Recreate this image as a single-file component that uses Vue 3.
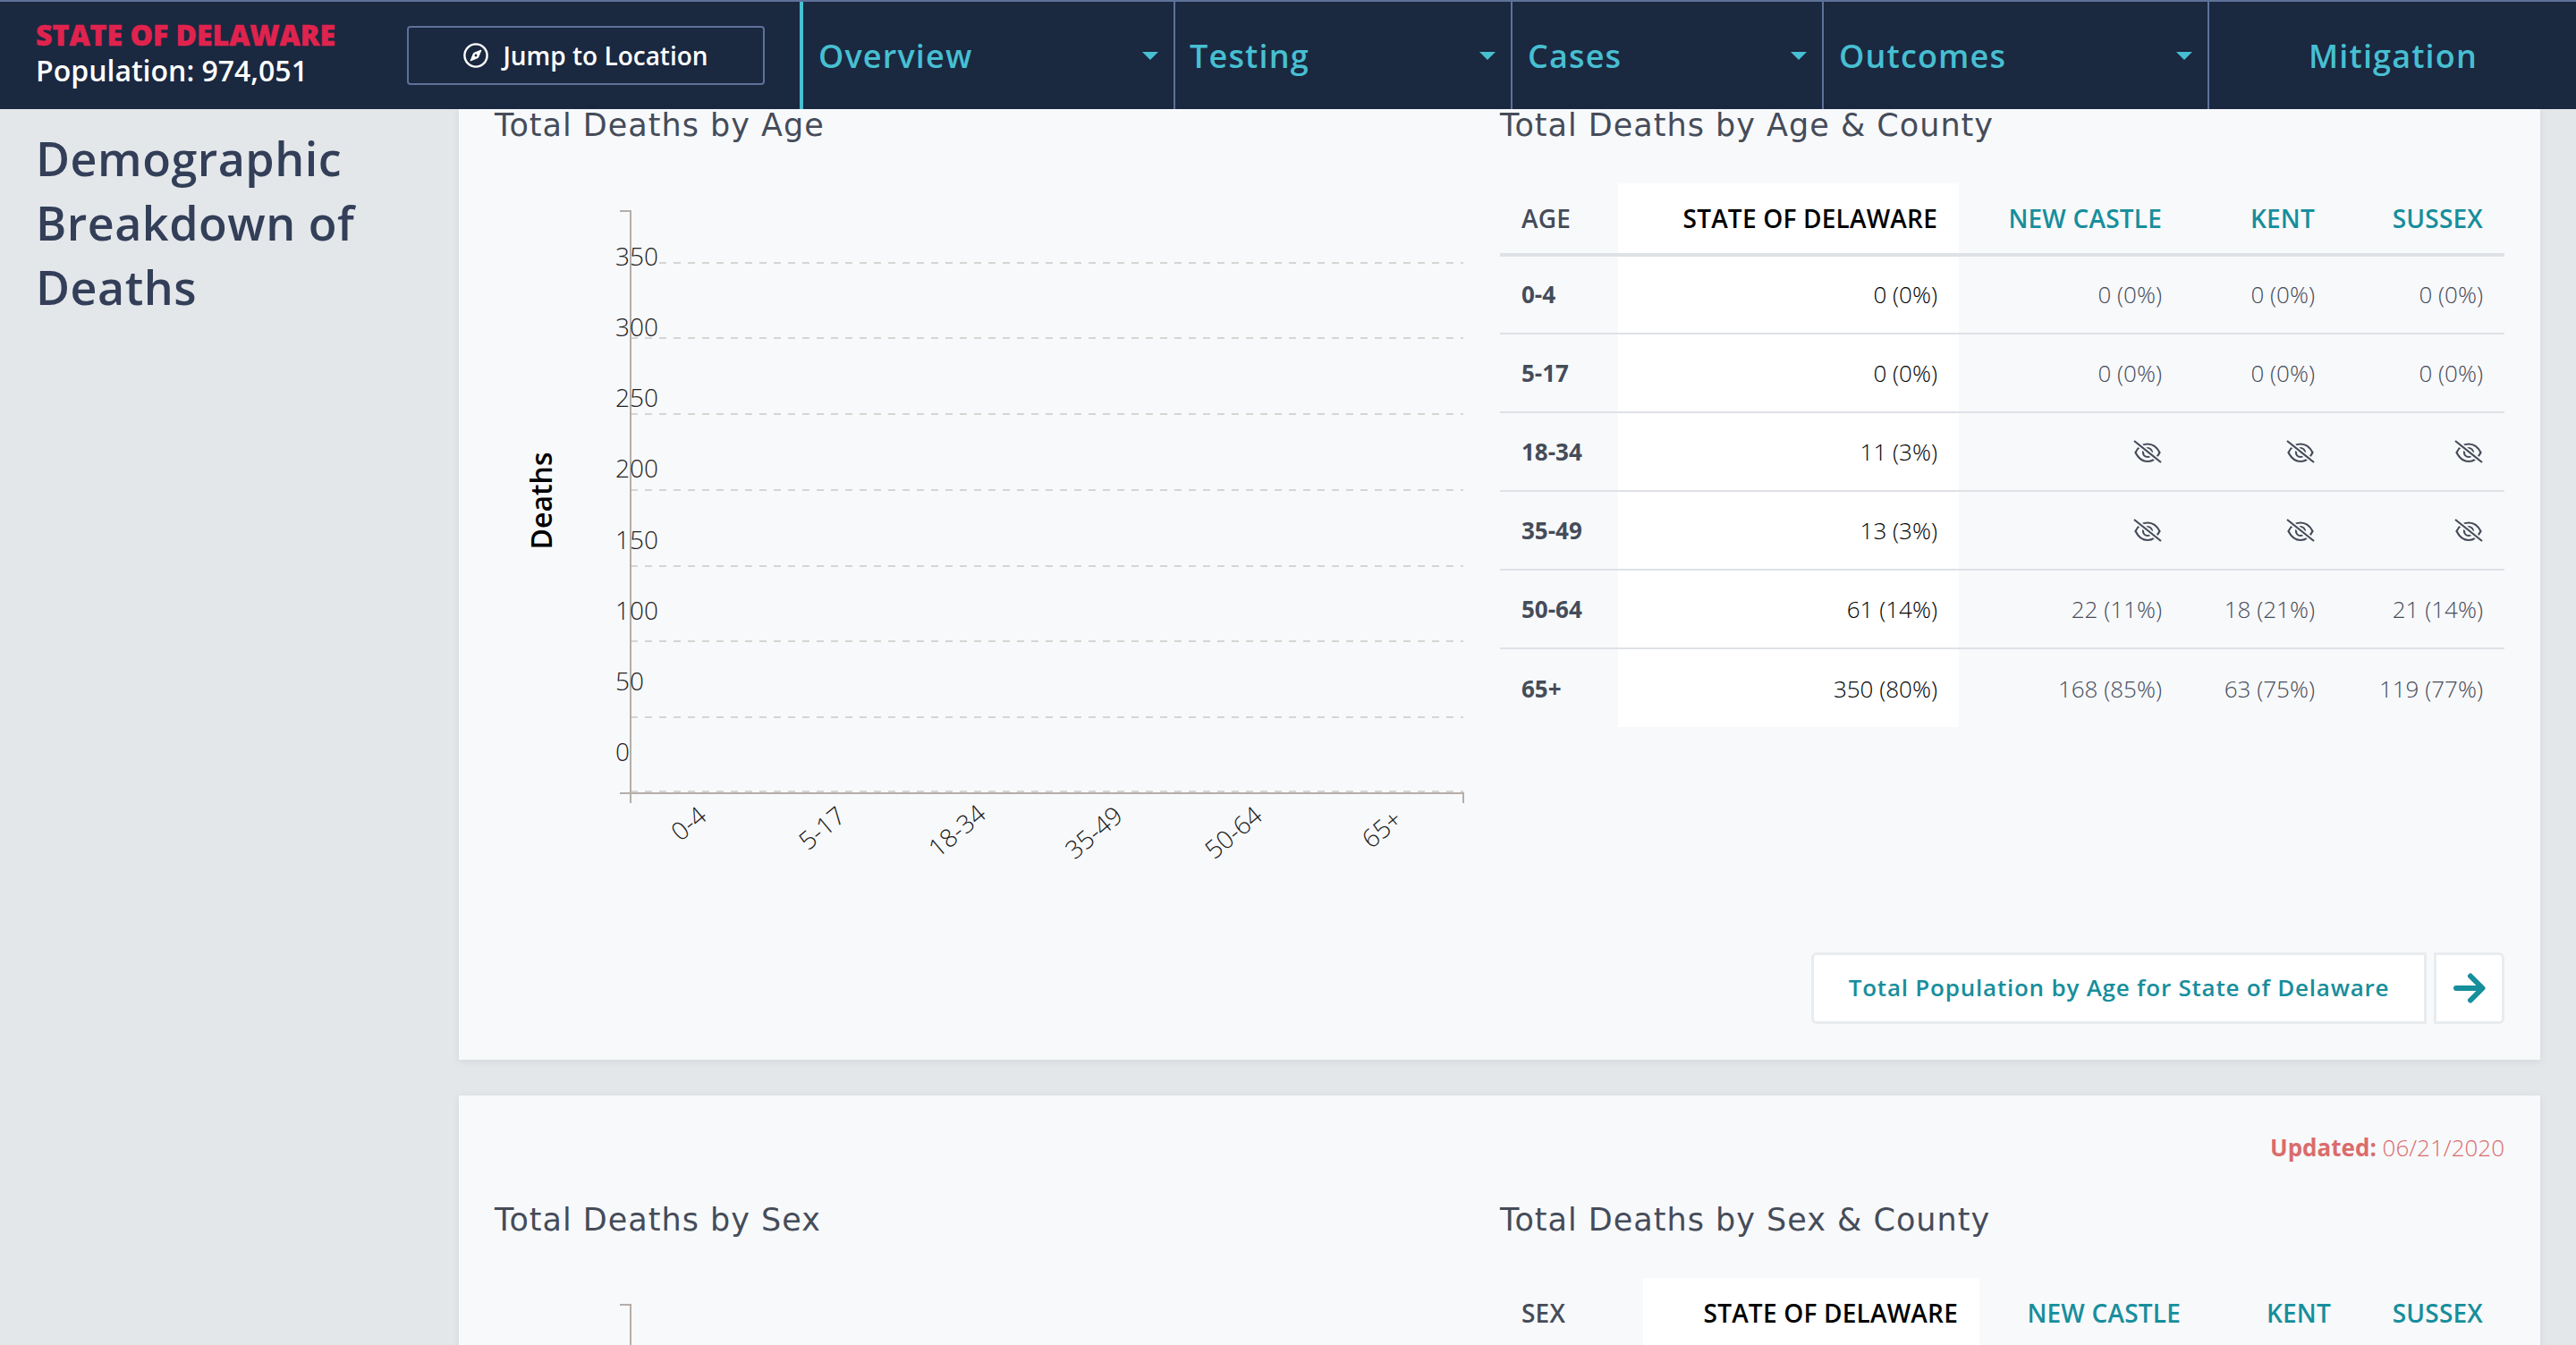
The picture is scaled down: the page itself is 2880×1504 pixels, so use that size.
<script setup>
const navItems = [
  { label: 'Overview', caret: true, cls: 'nav-overview' },
  { label: 'Testing', caret: true, cls: 'nav-testing' },
  { label: 'Cases', caret: true, cls: 'nav-cases' },
  { label: 'Outcomes', caret: true, cls: 'nav-outcomes' },
  { label: 'Mitigation', caret: false, cls: 'nav-mitigation' }
]

const gridLines = [
  { y: 294, x: 737 },
  { y: 378, x: 705 },
  { y: 463, x: 705 },
  { y: 548, x: 705 },
  { y: 633, x: 705 },
  { y: 717, x: 705 },
  { y: 802, x: 705 },
  { y: 885, x: 705 }
]

const yLabels = [
  { text: '350', y: 297 },
  { text: '300', y: 376 },
  { text: '250', y: 455 },
  { text: '200', y: 534 },
  { text: '150', y: 614 },
  { text: '100', y: 693 },
  { text: '50', y: 772 },
  { text: '0', y: 851 }
]

const xLabels = [
  { text: '0-4', x: 770, y: 931 },
  { text: '5-17', x: 919, y: 936 },
  { text: '18-34', x: 1070, y: 939 },
  { text: '35-49', x: 1223, y: 941 },
  { text: '50-64', x: 1379, y: 941 },
  { text: '65+', x: 1545, y: 937 }
]

const rows = [
  { age: '0-4', state: '0 (0%)', nc: '0 (0%)', kent: '0 (0%)', sussex: '0 (0%)' },
  { age: '5-17', state: '0 (0%)', nc: '0 (0%)', kent: '0 (0%)', sussex: '0 (0%)' },
  { age: '18-34', state: '11 (3%)', nc: null, kent: null, sussex: null },
  { age: '35-49', state: '13 (3%)', nc: null, kent: null, sussex: null },
  { age: '50-64', state: '61 (14%)', nc: '22 (11%)', kent: '18 (21%)', sussex: '21 (14%)' },
  { age: '65+', state: '350 (80%)', nc: '168 (85%)', kent: '63 (75%)', sussex: '119 (77%)' }
]

const counties = ['nc', 'kent', 'sussex']
</script>

<template>
  <div class="page">
    <header class="topbar">
      <div class="place">
        <div class="place-name">STATE OF DELAWARE</div>
        <div class="place-pop">Population: 974,051</div>
      </div>
      <div class="jump-wrap">
        <button class="jump">
          <svg class="compass" viewBox="0 0 28 28" fill="none" stroke="#fff" stroke-width="2.4">
            <circle cx="14" cy="14" r="12.6" />
            <path d="M20 8 L16.5 16.5 L8 20 L11.5 11.5 Z" fill="#fff" stroke-width="1" />
            <circle cx="14" cy="14" r="1.4" fill="#1a2840" stroke="none" />
          </svg>
          Jump to Location
        </button>
      </div>
      <nav class="nav">
        <div v-for="item in navItems" :key="item.label" class="nav-item" :class="item.cls">
          <span>{{ item.label }}</span>
          <i v-if="item.caret" class="caret"></i>
        </div>
      </nav>
    </header>

    <main class="main">
      <aside class="side">
        <h2>Demographic Breakdown of Deaths</h2>
      </aside>

      <div class="cards">
        <section class="card card-age">
          <div class="columns">
            <div class="col">
              <h3>Total Deaths by Age</h3>
            </div>
            <div class="col">
              <h3>Total Deaths by Age &amp; County</h3>
              <table class="tbl">
                <colgroup>
                  <col style="width: 132px" />
                  <col style="width: 381px" />
                  <col style="width: 251px" />
                  <col style="width: 171px" />
                  <col style="width: 188px" />
                </colgroup>
                <thead>
                  <tr>
                    <th class="first">AGE</th>
                    <th class="state">STATE OF DELAWARE</th>
                    <th class="county">NEW CASTLE</th>
                    <th class="county">KENT</th>
                    <th class="county">SUSSEX</th>
                  </tr>
                </thead>
                <tbody>
                  <tr v-for="row in rows" :key="row.age">
                    <td class="first">{{ row.age }}</td>
                    <td class="state">{{ row.state }}</td>
                    <td v-for="c in counties" :key="c" class="county">
                      <template v-if="row[c]">{{ row[c] }}</template>
                      <svg v-else class="eye" viewBox="0 0 32 26" fill="none" stroke="#454c59" stroke-width="2.2">
                        <path d="M2.5 14 C5.5 8 10 4.5 16 4.5 C22 4.5 26.5 8 29.5 14 C26.5 20 22 24 16 24 C10 24 5.5 20 2.5 14 Z" />
                        <circle cx="16" cy="14" r="5" />
                        <path d="M1 1 L31 25" stroke="#f8f9fb" stroke-width="5.5" />
                        <path d="M1 1 L31 25" />
                      </svg>
                    </td>
                  </tr>
                </tbody>
              </table>
            </div>
          </div>
          <div class="links">
            <a class="link-main">Total Population by Age for State of Delaware</a>
            <a class="link-arrow">
              <svg viewBox="0 0 36 34" width="36" height="34" fill="none" stroke="#178e9c" stroke-width="6" stroke-linecap="round" stroke-linejoin="round">
                <path d="M3 17 H32 M19 3.5 L32.5 17 L19 30.5" />
              </svg>
            </a>
          </div>
        </section>

        <section class="card card-sex">
          <div class="updated"><b>Updated:</b> 06/21/2020</div>
          <div class="columns">
            <div class="col">
              <h3>Total Deaths by Sex</h3>
            </div>
            <div class="col">
              <h3>Total Deaths by Sex &amp; County</h3>
              <table class="tbl">
                <colgroup>
                  <col style="width: 160px" />
                  <col style="width: 376px" />
                  <col style="width: 249px" />
                  <col style="width: 168px" />
                  <col style="width: 170px" />
                </colgroup>
                <thead>
                  <tr>
                    <th class="first">SEX</th>
                    <th class="state">STATE OF DELAWARE</th>
                    <th class="county">NEW CASTLE</th>
                    <th class="county">KENT</th>
                    <th class="county">SUSSEX</th>
                  </tr>
                </thead>
              </table>
            </div>
          </div>
        </section>

        <!-- both charts share one free canvas over the cards -->
        <svg class="chart" viewBox="0 0 2880 1504" width="2880" height="1504">
          <line v-for="g in gridLines" :key="g.y" :x1="g.x" :x2="1636" :y1="g.y" :y2="g.y" class="grid" />
          <path d="M693 236 H705 V898" class="axis" />
          <path d="M693 887 H1636 V898" class="axis" />
          <path d="M693 1459 H705 V1504" class="axis" />
          <text v-for="l in yLabels" :key="l.text" x="688" :y="l.y" class="tick">{{ l.text }}</text>
          <text
            v-for="l in xLabels"
            :key="l.text"
            :x="l.x"
            :y="l.y"
            class="tick mid"
            :transform="`rotate(-40 ${l.x} ${l.y - 10})`"
          >{{ l.text }}</text>
          <text x="0" y="0" class="ytitle" transform="translate(617 560) rotate(-90)">Deaths</text>
        </svg>
      </div>
    </main>
  </div>
</template>

<style scoped>
.page {
  width: 2880px;
  height: 1504px;
  overflow: hidden;
  background: #e4e7ea;
  font-family: 'Open Sans', 'Noto Sans', sans-serif;
  display: flex;
  flex-direction: column;
}

.topbar {
  height: 122px;
  box-sizing: border-box;
  flex: none;
  display: flex;
  background: #1a2840;
  border-top: 2px solid #5d7199;
}
.place {
  width: 455px;
  flex: none;
  box-sizing: border-box;
  padding: 17px 0 0 40px;
}
.place-name {
  color: #e0234e;
  font-size: 32px;
  font-weight: 800;
  line-height: 40px;
  -webkit-text-stroke: 0.5px #e0234e;
}
.place-pop {
  color: #fff;
  font-size: 32px;
  font-weight: 600;
  line-height: 40px;
}
.jump-wrap {
  width: 439px;
  flex: none;
  padding-top: 27px;
}
.jump {
  width: 400px;
  height: 66px;
  box-sizing: border-box;
  background: transparent;
  border: 2px solid #5d7199;
  border-radius: 4px;
  color: #fff;
  font-family: inherit;
  font-size: 28px;
  font-weight: 600;
  display: flex;
  align-items: center;
  justify-content: center;
  gap: 16px;
}
.compass {
  width: 28px;
  height: 28px;
}
.nav {
  flex: 1;
  display: flex;
}
.nav-item {
  box-sizing: border-box;
  border-left: 2px solid #5d7199;
  color: #47bfd1;
  font-size: 36px;
  font-weight: 600;
  letter-spacing: 1.15px;
  display: flex;
  align-items: center;
  justify-content: space-between;
  padding: 0 17px 0 16px;
}
.nav-overview { width: 418px; border-left: 4px solid #47bfd1; padding-left: 17px; }
.nav-testing { width: 377px; }
.nav-cases { width: 348px; padding-left: 17px; }
.nav-outcomes { width: 431px; padding-left: 17px; }
.nav-mitigation { flex: 1; justify-content: flex-start; padding-left: 111px; }
.caret {
  width: 0;
  height: 0;
  border-left: 9px solid transparent;
  border-right: 9px solid transparent;
  border-top: 9px solid #47bfd1;
  margin-right: 0;
}

.main {
  flex: 1;
  display: flex;
  min-height: 0;
}
.side {
  width: 513px;
  flex: none;
  box-sizing: border-box;
  padding: 19px 40px 0;
}
.side h2 {
  margin: 0;
  color: #333f58;
  font-size: 52px;
  font-weight: 600;
  letter-spacing: 0.5px;
  line-height: 72px;
}
.cards {
  width: 2327px;
  flex: none;
  display: flex;
  flex-direction: column;
  gap: 40px;
}
.card {
  flex: none;
  box-sizing: border-box;
  background: #f8f9fb;
  box-shadow: 0 2px 8px rgba(60, 70, 90, 0.1);
  padding: 0 40px;
}
.card-age {
  height: 1063px;
  position: relative;
}
.card-sex {
  height: 400px;
  padding-top: 40px;
}
.columns {
  display: grid;
  grid-template-columns: 1124px 1123px;
}
h3 {
  margin: 0;
  color: #454c59;
  font-family: 'DejaVu Sans', 'Open Sans', sans-serif;
  font-size: 35px;
  font-weight: 400;
  letter-spacing: 1px;
  line-height: 36px;
}
.updated {
  text-align: right;
  color: #da6c6c;
  font-size: 26px;
  font-weight: 300;
  line-height: 36px;
}
.updated b {
  font-weight: 700;
}
.card-sex h3 {
  margin-top: 45px;
}
.tbl {
  border-collapse: collapse;
  table-layout: fixed;
  margin-top: 47px;
  width: 100%;
  font-size: 26px;
}
.card-sex .tbl {
  width: 1123px;
}
.tbl th {
  height: 80px;
  box-sizing: border-box;
  padding: 0 24px;
  font-size: 28px;
  font-weight: 600;
  letter-spacing: 0.2px;
  text-align: right;
  border-bottom: 4px solid #dee1e6;
  color: #454c59;
}
.tbl td {
  height: 88px;
  box-sizing: border-box;
  padding: 0 24px;
  text-align: right;
  color: #454c59;
  font-weight: 300;
  border-bottom: 2px solid #dee1e6;
}
.tbl tbody tr:first-child td {
  padding-bottom: 2px;
}
.tbl tr:last-child td {
  border-bottom: none;
}
.tbl .first {
  text-align: left;
  font-weight: 700;
}
.tbl th.first {
  font-weight: 600;
}
.tbl th.state {
  background: #fff;
  color: #000;
}
.tbl td.state {
  background: #fff;
  color: #000;
  font-weight: 300;
}
.tbl th.county {
  color: #178e9c;
}
.eye {
  width: 32px;
  height: 26px;
  display: block;
  margin-left: auto;
}
.links {
  position: absolute;
  right: 40px;
  bottom: 40px;
  display: flex;
  gap: 8px;
}
.links a {
  height: 80px;
  box-sizing: border-box;
  background: #fff;
  border: 3px solid #e9ecef;
  display: flex;
  align-items: center;
  justify-content: center;
  color: #178e9c;
}
.link-main {
  width: 688px;
  font-size: 26px;
  font-weight: 600;
  letter-spacing: 0.78px;
  padding-bottom: 2px;
  border-radius: 6px 0 0 6px;
}
.link-arrow {
  width: 79px;
  border-radius: 0 6px 6px 0;
}

.chart {
  position: absolute;
  left: 0;
  top: 0;
  pointer-events: none;
}
.grid {
  stroke: #d7d5d0;
  stroke-width: 2;
  stroke-dasharray: 8 8;
}
.axis {
  fill: none;
  stroke: #b5aea9;
  stroke-width: 2;
}
.tick {
  fill: #222;
  font-size: 28px;
  font-weight: 300;
}
.mid {
  text-anchor: middle;
}
.ytitle {
  fill: #000;
  font-size: 32px;
  font-weight: 600;
  text-anchor: middle;
}
</style>
